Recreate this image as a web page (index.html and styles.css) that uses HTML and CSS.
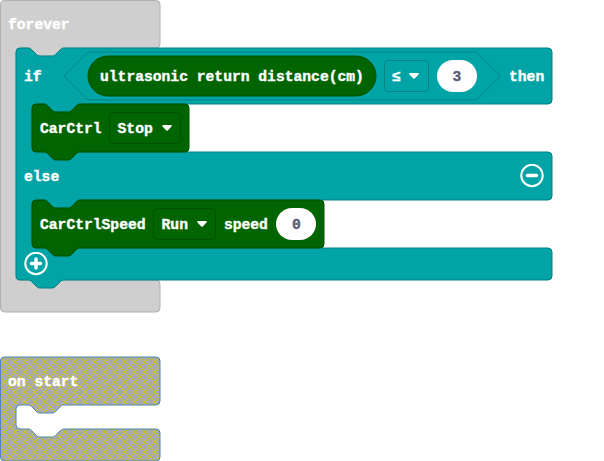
FILE: index.html
```html
<!DOCTYPE html>
<html lang="en">
<head>
<meta charset="utf-8">
<title>Blocks</title>
<link rel="stylesheet" href="styles.css">
</head>
<body>
<main class="workspace">
  <section class="stack forever">
    <svg class="shapes" width="604" height="314" viewBox="0 0 604 314">
      <path class="event" d="M0.5,4.5a4,4 0 0 1 4,-4H156a4,4 0 0 1 4,4V44a4,4 0 0 1 -4,4H64c-2,0 -3,1 -4,2l-4,4c-1,1 -2,2 -4,2h-12c-2,0 -3,-1 -4,-2l-4,-4c-1,-1 -2,-2 -4,-2h-8a4,4 0 0 0 -4,4V280H156a4,4 0 0 1 4,4V308a4,4 0 0 1 -4,4H4.500a4,4 0 0 1 -4,-4z"/>
      <path class="logic" d="M16,52a4,4 0 0 1 4,-4h8c2,0 3,1 4,2l4,4c1,1 2,2 4,2h12c2,0 3,-1 4,-2l4,-4c1,-1 2,-2 4,-2H548a4,4 0 0 1 4,4V100a4,4 0 0 1 -4,4H80c-2,0 -3,1 -4,2l-4,4c-1,1 -2,2 -4,2h-12c-2,0 -3,-1 -4,-2l-4,-4c-1,-1 -2,-2 -4,-2h-8a4,4 0 0 0 -4,4V148a4,4 0 0 0 4,4H548a4,4 0 0 1 4,4V196a4,4 0 0 1 -4,4H80c-2,0 -3,1 -4,2l-4,4c-1,1 -2,2 -4,2h-12c-2,0 -3,-1 -4,-2l-4,-4c-1,-1 -2,-2 -4,-2h-8a4,4 0 0 0 -4,4V244a4,4 0 0 0 4,4H548a4,4 0 0 1 4,4V276a4,4 0 0 1 -4,4H64c-2,0 -3,1 -4,2l-4,4c-1,1 -2,2 -4,2h-12c-2,0 -3,-1 -4,-2l-4,-4c-1,-1 -2,-2 -4,-2h-8a4,4 0 0 1 -4,-4z"/>
      <path class="logic" d="M88,52H476.500L500.500,76L476.500,100H88L64,76z"/>
      <rect class="car" x="88" y="56" width="288" height="40" rx="20"/>
      <path class="car" d="M32,108a4,4 0 0 1 4,-4h8c2,0 3,1 4,2l4,4c1,1 2,2 4,2h12c2,0 3,-1 4,-2l4,-4c1,-1 2,-2 4,-2H185a4,4 0 0 1 4,4V148a4,4 0 0 1 -4,4H80c-2,0 -3,1 -4,2l-4,4c-1,1 -2,2 -4,2h-12c-2,0 -3,-1 -4,-2l-4,-4c-1,-1 -2,-2 -4,-2h-8a4,4 0 0 1 -4,-4z"/>
      <path class="car" d="M32,204a4,4 0 0 1 4,-4h8c2,0 3,1 4,2l4,4c1,1 2,2 4,2h12c2,0 3,-1 4,-2l4,-4c1,-1 2,-2 4,-2H320a4,4 0 0 1 4,4V244a4,4 0 0 1 -4,4H80c-2,0 -3,1 -4,2l-4,4c-1,1 -2,2 -4,2h-12c-2,0 -3,-1 -4,-2l-4,-4c-1,-1 -2,-2 -4,-2h-8a4,4 0 0 1 -4,-4z"/>
    </svg>
    <div class="row head"><span class="label">forever</span></div>
    <div class="row condition">
      <span class="label if">if</span>
      <span class="label reporter">ultrasonic return distance(cm)</span>
      <span class="field logic-field"><span class="label">≤</span><svg class="caret" width="12" height="8" viewBox="0 0 12 8"><path d="M2,1H10Q11.500,1.200 10.500,2.500L6.700,6.500Q6,7 5.300,6.500L1.500,2.500Q0.500,1.200 2,1z"/></svg></span>
      <span class="number">3</span>
      <span class="label then">then</span>
    </div>
    <div class="row statement">
      <span class="label">CarCtrl</span>
      <span class="field car-field"><span class="label">Stop</span><svg class="caret" width="12" height="8" viewBox="0 0 12 8"><path d="M2,1H10Q11.500,1.200 10.500,2.500L6.700,6.500Q6,7 5.300,6.500L1.500,2.500Q0.500,1.200 2,1z"/></svg></span>
    </div>
    <div class="row else">
      <span class="label">else</span>
      <svg class="button" width="24" height="24" viewBox="0 0 24 24"><circle cx="12" cy="11.500" r="10.700"/><path d="M7.500,11.500H16.500"/></svg>
    </div>
    <div class="row statement">
      <span class="label">CarCtrlSpeed</span>
      <span class="field car-field"><span class="label">Run</span><svg class="caret" width="12" height="8" viewBox="0 0 12 8"><path d="M2,1H10Q11.500,1.200 10.500,2.500L6.700,6.500Q6,7 5.300,6.500L1.500,2.500Q0.500,1.200 2,1z"/></svg></span>
      <span class="label">speed</span>
      <span class="number">0</span>
    </div>
    <div class="row foot">
      <svg class="button" width="24" height="24" viewBox="0 0 24 24"><circle cx="12" cy="11.500" r="10.700"/><path d="M7.500,11.500H16.500M12,7V16"/></svg>
    </div>
  </section>
  <section class="stack start">
    <svg class="shapes" width="170" height="104" viewBox="0 0 170 104">
      <defs>
        <pattern id="hatch" width="10" height="10" patternUnits="userSpaceOnUse">
          <rect class="hatch-base" width="10" height="10"/>
          <path class="hatch-line" d="M-1,-1L11,11M11,-1L-1,11"/>
        </pattern>
      </defs>
      <path class="disabled" fill="url(#hatch)" d="M0.500,4a4,4 0 0 1 4,-4H156a4,4 0 0 1 4,4V44a4,4 0 0 1 -4,4H64c-2,0 -3,1 -4,2l-4,4c-1,1 -2,2 -4,2h-12c-2,0 -3,-1 -4,-2l-4,-4c-1,-1 -2,-2 -4,-2h-8a4,4 0 0 0 -4,4V68a4,4 0 0 0 4,4h8c2,0 3,1 4,2l4,4c1,1 2,2 4,2h12c2,0 3,-1 4,-2l4,-4c1,-1 2,-2 4,-2H156a4,4 0 0 1 4,4V100a4,4 0 0 1 -4,4H4.500a4,4 0 0 1 -4,-4z"/>
    </svg>
    <div class="row head"><span class="label">on start</span></div>
  </section>
</main>
</body>
</html>
```

FILE: styles.css
```css
* { box-sizing: border-box; }
body { margin: 0; background: #fff; }
.workspace {
  width: 604px;
  height: 461px;
  overflow: hidden;
  display: flex;
  flex-direction: column;
  gap: 45px;
  font: bold 14.66px/20px "Liberation Mono", monospace;
  color: #fff;
  -webkit-text-stroke: 0.4px currentColor;
}
.stack { position: relative; flex: none; }
.forever { height: 312px; }
.start { height: 104px; }
.shapes { position: absolute; left: 0; top: 0; overflow: visible; }
.event { fill: #cfcfcf; stroke: #b0b0b0; }
.logic { fill: #00a4a6; stroke: #008385; }
.car { fill: #006400; stroke: #005000; }
.disabled { stroke: #4a86b8; }
.hatch-base { fill: #aaa; }
.hatch-line { stroke: #cc0; fill: none; }
.row {
  position: relative;
  display: flex;
  align-items: center;
  height: 48px;
  white-space: pre;
}
.label { padding-top: 2px; }
.head { padding-left: 8px; }
.condition { height: 56px; padding-left: 24px; }
.if { width: 64px; }
.reporter { width: 288px; padding-left: 12px; }
.field {
  display: flex;
  align-items: center;
  gap: 8px;
  height: 32px;
  padding: 0 7.500px;
  border: 1px solid;
  border-radius: 4px;
}
.logic-field { width: 45px; gap: 7px; padding: 0 7px; margin-left: 8px; border-color: #008385; }
.car-field { border-color: #005000; }
.caret { fill: #fff; flex: none; }
.number {
  width: 40px;
  height: 32px;
  border-radius: 16px;
  background: #fff;
  color: #575e75;
  line-height: 34px;
  text-align: center;
}
.condition .number { margin-left: 8px; }
.statement .number { margin-left: 1px; }
.then { margin-left: 32px; }
.statement { padding-left: 40px; gap: 7.500px; }
.else { width: 544px; padding-left: 24px; justify-content: space-between; }
.foot { height: 32px; padding-left: 24px; }
.button { fill: none; stroke: #fff; stroke-width: 2; }
.button path { stroke-width: 3.500; stroke-linecap: round; }
```
